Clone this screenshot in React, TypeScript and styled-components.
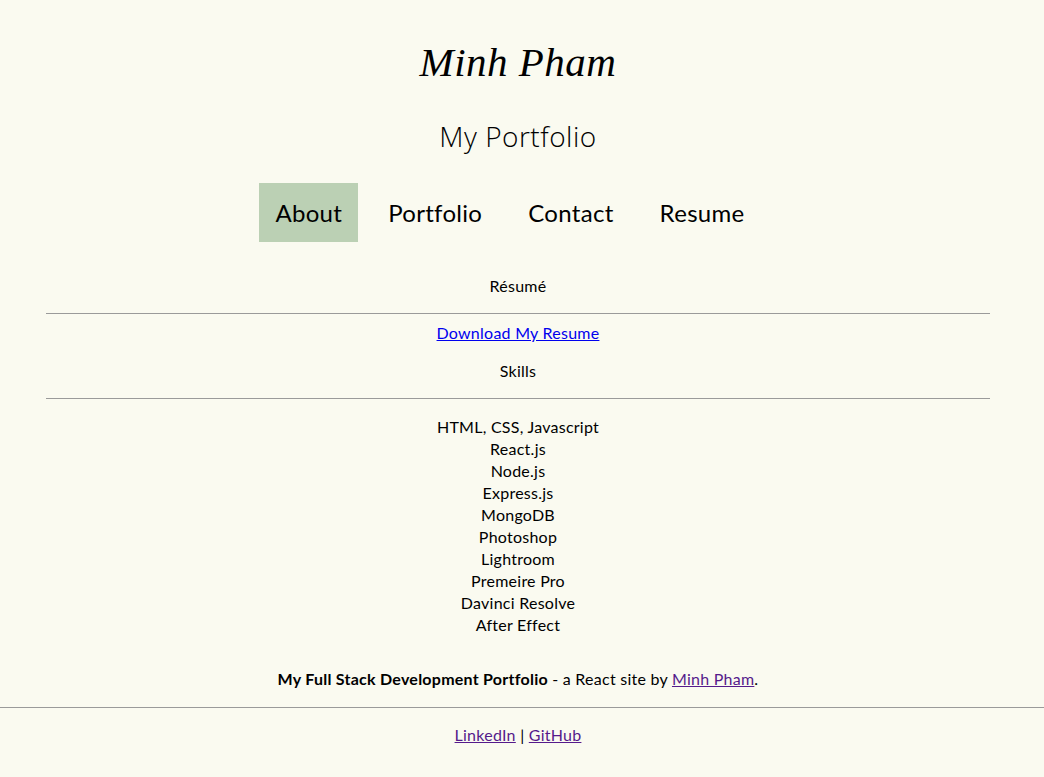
import styled, { createGlobalStyle } from "styled-components";

const GlobalStyle = createGlobalStyle`
  html, body {
    margin: 0;
    padding: 0;
    background: #fafaf0;
  }
  body {
    font-family: Lato, "Open Sans", sans-serif;
    color: #000;
  }
`;

const navItems = ["About", "Portfolio", "Contact", "Resume"];

const skills = [
  "HTML, CSS, Javascript",
  "React.js",
  "Node.js",
  "Express.js",
  "MongoDB",
  "Photoshop",
  "Lightroom",
  "Premeire Pro",
  "Davinci Resolve",
  "After Effect",
];

const App = () => {
  return (
    <Page>
      <GlobalStyle />
      <Header>
        <Title>Minh Pham</Title>
        <Subtitle>My Portfolio</Subtitle>
        <Nav>
          {navItems.map((item) => (
            <NavItem key={item} $active={item === "About"}>
              {item}
            </NavItem>
          ))}
        </Nav>
      </Header>

      <Main>
        <SectionTitle>Résumé</SectionTitle>
        <Rule />
        <DownloadLink href="#resume">Download My Resume</DownloadLink>
        <SectionTitle>Skills</SectionTitle>
        <Rule />
        <SkillList>
          {skills.map((skill) => (
            <li key={skill}>{skill}</li>
          ))}
        </SkillList>
      </Main>

      <Footer>
        <Credit>
          <strong>My Full Stack Development Portfolio</strong> - a React site by{" "}
          <Visited href="#minh">Minh Pham</Visited>.
        </Credit>
        <FooterRule />
        <Credit>
          <Visited href="#linkedin">LinkedIn</Visited> |{" "}
          <Visited href="#github">GitHub</Visited>
        </Credit>
      </Footer>
    </Page>
  );
};

const Page = styled.div`
  display: flex;
  flex-direction: column;
  min-height: 777px;
  letter-spacing: 0.25px;
`;

const Header = styled.header`
  display: flex;
  flex-direction: column;
  align-items: center;
  padding: 38px 8px 0 0;
`;

const Title = styled.h1`
  margin: 0;
  font-family: "Liberation Serif", serif;
  font-style: italic;
  font-weight: normal;
  font-size: 41px;
  line-height: 48px;
  letter-spacing: 0.5px;
`;

const Subtitle = styled.h2`
  margin: 32px 0 0;
  font-family: "Open Sans", sans-serif;
  font-weight: 300;
  font-size: 28px;
  line-height: 36px;
  letter-spacing: 0.5px;
`;

const Nav = styled.nav`
  display: flex;
  gap: 14px;
  margin: 29px 16px 0 0;
`;

const NavItem = styled.a<{ $active?: boolean }>`
  padding: 12px 16px;
  font-size: 24px;
  line-height: 35px;
  letter-spacing: 0.3px;
  color: #000;
  text-decoration: none;
  background: ${(p) => (p.$active ? "#bbd0b4" : "transparent")};
  cursor: pointer;
`;

const Main = styled.main`
  display: flex;
  flex-direction: column;
  align-items: center;
  margin: 33px 54px 0 46px;
  font-size: 16px;
  line-height: 22px;
`;

const SectionTitle = styled.div`
  margin-top: 16px;
  &:first-child {
    margin-top: 0;
  }
`;

const Rule = styled.hr`
  align-self: stretch;
  margin: 16px 0 8px;
  border: 0;
  border-top: 1px solid #9a9a9a;
`;

const DownloadLink = styled.a`
  color: #0000ee;
  text-decoration: underline;
`;

const SkillList = styled.ul`
  list-style: none;
  margin: 9px 0 0;
  padding: 0;
  text-align: center;
`;

const Footer = styled.footer`
  display: flex;
  flex-direction: column;
  align-items: center;
  margin-top: 32px;
  padding-bottom: 31px;
  font-size: 16px;
  line-height: 22px;
`;

const Credit = styled.p`
  margin: 0;
  padding-right: 8px;
`;

const FooterRule = styled.hr`
  align-self: stretch;
  margin: 17px 0 16px;
  border: 0;
  border-top: 1px solid #9a9a9a;
`;

const Visited = styled.a`
  color: #551a8b;
  text-decoration: underline;
`;

export default App;
